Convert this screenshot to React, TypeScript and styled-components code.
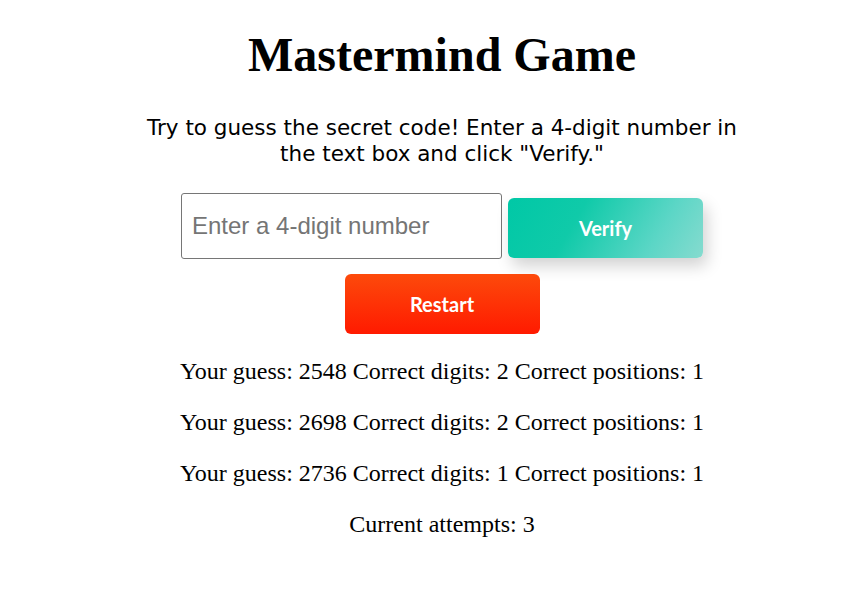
import React from "react";
import styled, { createGlobalStyle } from "styled-components";

const Global = createGlobalStyle`
  html, body { margin: 0; padding: 0; background: #fff; }
  body { font-family: "Liberation Serif", "Times New Roman", serif; color: #000; }
`;

const Page = styled.div`
  display: flex;
  flex-direction: column;
  align-items: center;
  padding: 0 0 0 31px;
`;

const Title = styled.h1`
  font-family: "Liberation Serif", serif;
  font-weight: bold;
  font-size: 48px;
  margin: 27px 0 0;
  line-height: 56px;
`;

const Intro = styled.p`
  font-family: "DejaVu Sans", sans-serif;
  font-size: 21.5px;
  line-height: 26px;
  text-align: center;
  width: 610px;
  margin: 32px 0 0;
`;

const InputRow = styled.div`
  display: flex;
  align-items: flex-start;
  gap: 6px;
  margin-top: 26px;
`;

const CodeInput = styled.input`
  box-sizing: border-box;
  width: 321px;
  height: 66px;
  border: 1px solid #767676;
  border-radius: 3px;
  padding: 0 10px;
  font-family: "Liberation Sans", Arial, sans-serif;
  font-size: 24px;
  color: #000;
  &::placeholder { color: #757575; }
  &:focus { outline: none; }
`;

const ActionButton = styled.button<{ $variant: "verify" | "restart" }>`
  width: 195px;
  height: 60px;
  margin-top: ${(p) => (p.$variant === "verify" ? "5px" : "0")};
  border: none;
  border-radius: 6px;
  color: #fff;
  font-family: Lato, sans-serif;
  font-weight: bold;
  font-size: 20px;
  cursor: pointer;
  background: ${(p) =>
    p.$variant === "verify"
      ? "linear-gradient(120deg, #00c8a6 0%, #10caa9 35%, #5cd6c6 75%, #86dbcf 100%)"
      : "linear-gradient(180deg, #fd4a0b 0%, #ff1a00 100%)"};
  box-shadow: ${(p) =>
    p.$variant === "verify" ? "4px 8px 16px rgba(0,0,0,0.18)" : "none"};
`;

const RestartRow = styled.div`
  margin-top: 15px;
`;

const Results = styled.div`
  margin-top: 24px;
  display: flex;
  flex-direction: column;
  align-items: center;
`;

const Line = styled.p`
  font-family: "Liberation Serif", serif;
  font-size: 24px;
  line-height: 27px;
  margin: 0 0 24px;
`;

const guesses = [
  { g: "2548", d: 2, p: 1 },
  { g: "2698", d: 2, p: 1 },
  { g: "2736", d: 1, p: 1 },
];

export default function App() {
  return (
    <>
      <Global />
      <Page>
        <Title>Mastermind Game</Title>
        <Intro>
          Try to guess the secret code! Enter a 4-digit number in the text box and click "Verify."
        </Intro>
        <InputRow>
          <CodeInput placeholder="Enter a 4-digit number" />
          <ActionButton $variant="verify">Verify</ActionButton>
        </InputRow>
        <RestartRow>
          <ActionButton $variant="restart">Restart</ActionButton>
        </RestartRow>
        <Results>
          {guesses.map((x) => (
            <Line key={x.g}>
              Your guess: {x.g} Correct digits: {x.d} Correct positions: {x.p}
            </Line>
          ))}
          <Line>Current attempts: 3</Line>
        </Results>
      </Page>
    </>
  );
}
